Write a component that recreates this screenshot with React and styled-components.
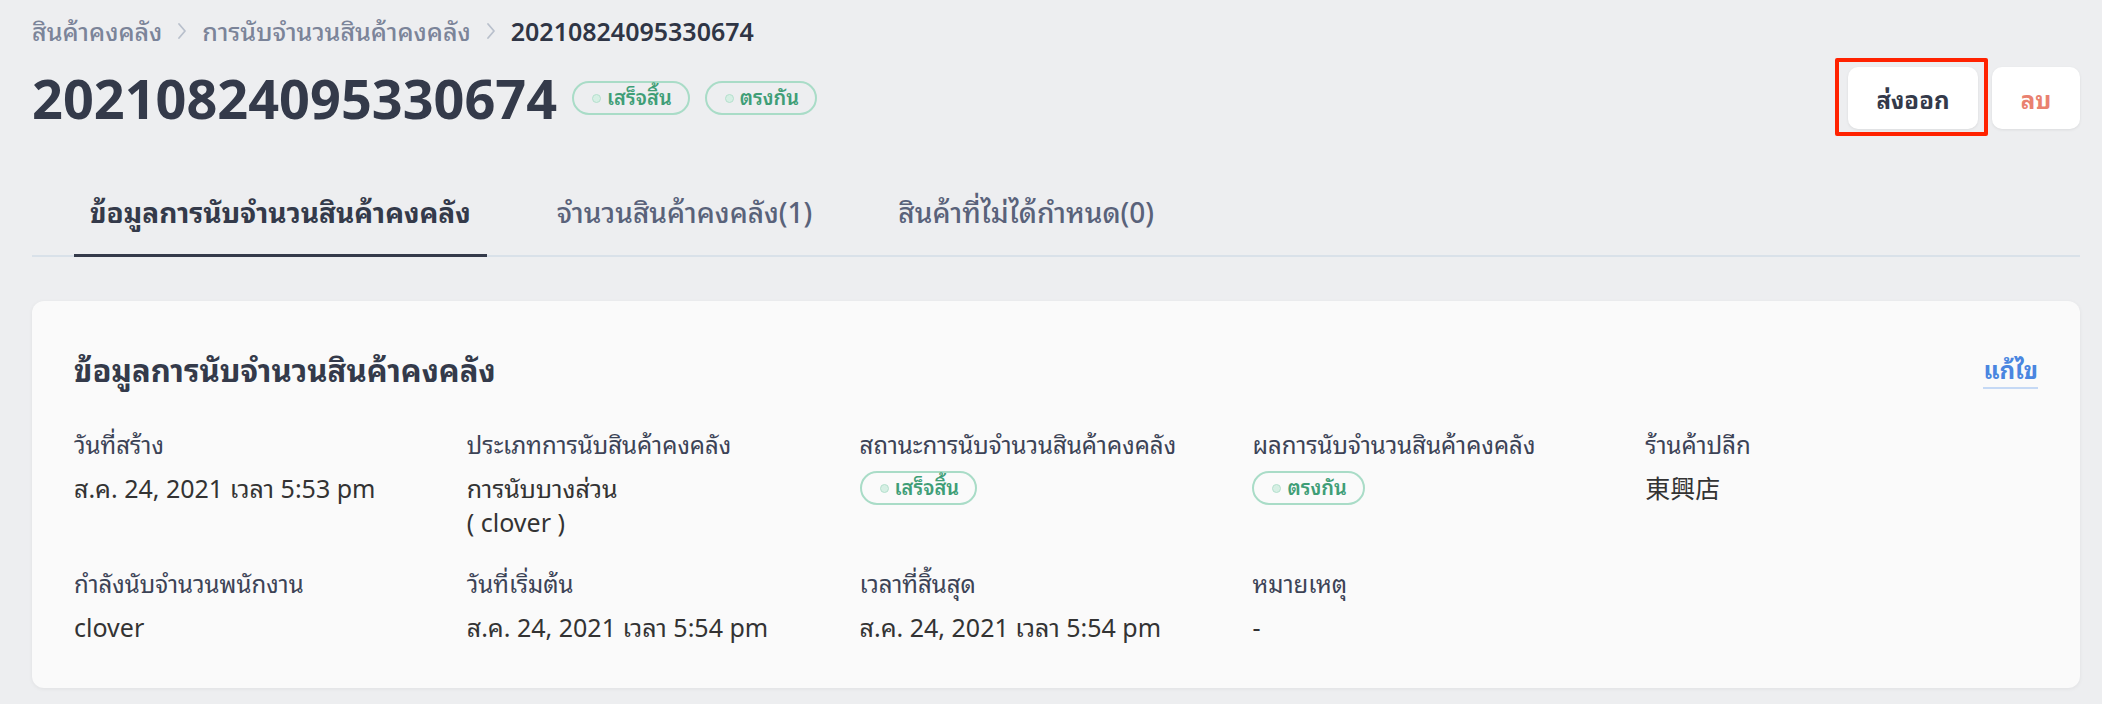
import React from "react";
import styled, { createGlobalStyle } from "styled-components";

const GlobalStyle = createGlobalStyle`
  html, body { margin: 0; padding: 0; }
  body {
    background: #edeef0;
    font-family: "Noto Sans", "Noto Sans Thai Looped", "Noto Looped Thai", "Noto Sans Thai", "Noto Sans CJK TC", sans-serif;
    color: #343a4a;
  }
`;

const Page = styled.div`
  padding: 14px 22px 18px 32px;
`;

const Breadcrumb = styled.nav`
  display: flex;
  align-items: center;
  gap: 15px;
  font-size: 25px;
  line-height: 34px;
`;

const Crumb = styled.span`
  color: ${(p) => (p.$current ? "#2f3545" : "#7b8499")};
  font-weight: ${(p) => (p.$current ? 600 : 500)};
`;

const Chevron = () => (
  <svg width="10" height="18" viewBox="0 0 10 18" fill="none">
    <polyline points="2,2 8,9 2,16" stroke="#b9c0cc" strokeWidth="1.8" strokeLinecap="round" strokeLinejoin="round" />
  </svg>
);

const TitleRow = styled.div`
  display: flex;
  align-items: center;
  justify-content: space-between;
  margin-top: 18px;
`;

const TitleLeft = styled.div`
  display: flex;
  align-items: center;
  gap: 15px;
`;

const Title = styled.h1`
  margin: 0;
  font-size: 54px;
  line-height: 64px;
  font-weight: 700;
  color: #343a4a;
`;

const Badge = styled.span`
  display: inline-flex;
  align-items: center;
  gap: 6px;
  height: 34px;
  box-sizing: border-box;
  padding: 0 16px 0 18px;
  border: 2px solid #a9dcc7;
  border-radius: 17px;
  color: #3f9e77;
  font-size: 20px;
  font-weight: 600;
  line-height: 1;
  white-space: nowrap;
`;

const Dot = styled.span`
  width: 7px;
  height: 7px;
  border-radius: 50%;
  background: #d6efe4;
  border: 1px solid #b4e0cd;
`;

const Actions = styled.div`
  display: flex;
  align-items: center;
  gap: 14px;
`;

const Highlight = styled.div`
  position: relative;
  display: flex;
  &::after {
    content: "";
    position: absolute;
    top: -9px;
    left: -13px;
    right: -10px;
    bottom: -7px;
    border: 4px solid #ff2200;
    border-radius: 2px;
    pointer-events: none;
  }
`;

const Button = styled.button`
  height: 62px;
  min-width: ${(p) => p.$w}px;
  padding: 0 24px;
  border: none;
  border-radius: 10px;
  background: #ffffff;
  box-shadow: 0 1px 3px rgba(0, 0, 0, 0.08);
  font-family: inherit;
  font-size: 24px;
  font-weight: 700;
  color: ${(p) => (p.$danger ? "#e98170" : "#343a4a")};
  cursor: pointer;
`;

const Tabs = styled.div`
  display: flex;
  gap: 54px;
  padding-left: 42px;
  margin-top: 66px;
  border-bottom: 2px solid #d9e1e9;
`;

const Tab = styled.div`
  padding: 0 16px 26px;
  margin-bottom: -2px;
  font-size: 28px;
  line-height: 32px;
  font-weight: ${(p) => (p.$active ? 700 : 500)};
  color: ${(p) => (p.$active ? "#343a4a" : "#59627a")};
  border-bottom: 3px solid ${(p) => (p.$active ? "#343a4a" : "transparent")};
`;

const Card = styled.section`
  margin-top: 44px;
  background: #fafafa;
  border-radius: 12px;
  box-shadow: 0 1px 4px rgba(0, 0, 0, 0.06);
  padding: 50px 42px 44px;
`;

const CardHeader = styled.div`
  display: flex;
  align-items: center;
  justify-content: space-between;
`;

const CardTitle = styled.h2`
  margin: 0;
  font-size: 31px;
  line-height: 36px;
  font-weight: 700;
  color: #343a4a;
`;

const EditLink = styled.a`
  font-size: 24px;
  line-height: 30px;
  font-weight: 700;
  color: #4a86e0;
  text-decoration: none;
  border-bottom: 2px solid #c5d9f5;
  padding-bottom: 2px;
  margin-top: 4px;
`;

const Grid = styled.div`
  display: grid;
  grid-template-columns: repeat(5, 1fr);
  row-gap: 31px;
  margin-top: 42px;
`;

const Field = styled.div`
  display: flex;
  flex-direction: column;
  align-items: flex-start;
`;

const Label = styled.div`
  font-size: 24px;
  line-height: 28px;
  color: #3c4356;
  margin-bottom: 12px;
`;

const Value = styled.div`
  font-size: 25px;
  line-height: 34px;
  color: #333333;
`;

const fields = [
  { label: "วันที่สร้าง", value: "ส.ค. 24, 2021 เวลา 5:53 pm" },
  { label: "ประเภทการนับสินค้าคงคลัง", value: ["การนับบางส่วน", "( clover )"] },
  { label: "สถานะการนับจำนวนสินค้าคงคลัง", badge: "เสร็จสิ้น" },
  { label: "ผลการนับจำนวนสินค้าคงคลัง", badge: "ตรงกัน" },
  { label: "ร้านค้าปลีก", value: "東興店" },
  { label: "กำลังนับจำนวนพนักงาน", value: "clover" },
  { label: "วันที่เริ่มต้น", value: "ส.ค. 24, 2021 เวลา 5:54 pm" },
  { label: "เวลาที่สิ้นสุด", value: "ส.ค. 24, 2021 เวลา 5:54 pm" },
  { label: "หมายเหตุ", value: "-" },
];

const StatusBadge = ({ children }) => (
  <Badge>
    <Dot />
    {children}
  </Badge>
);

export default function App() {
  return (
    <>
      <GlobalStyle />
      <Page>
        <Breadcrumb>
          <Crumb>สินค้าคงคลัง</Crumb>
          <Chevron />
          <Crumb>การนับจำนวนสินค้าคงคลัง</Crumb>
          <Chevron />
          <Crumb $current>20210824095330674</Crumb>
        </Breadcrumb>

        <TitleRow>
          <TitleLeft>
            <Title>20210824095330674</Title>
            <StatusBadge>เสร็จสิ้น</StatusBadge>
            <StatusBadge>ตรงกัน</StatusBadge>
          </TitleLeft>
          <Actions>
            <Highlight>
              <Button $w={130}>ส่งออก</Button>
            </Highlight>
            <Button $w={88} $danger>
              ลบ
            </Button>
          </Actions>
        </TitleRow>

        <Tabs>
          <Tab $active>ข้อมูลการนับจำนวนสินค้าคงคลัง</Tab>
          <Tab>จำนวนสินค้าคงคลัง(1)</Tab>
          <Tab>สินค้าที่ไม่ได้กำหนด(0)</Tab>
        </Tabs>

        <Card>
          <CardHeader>
            <CardTitle>ข้อมูลการนับจำนวนสินค้าคงคลัง</CardTitle>
            <EditLink href="#">แก้ไข</EditLink>
          </CardHeader>
          <Grid>
            {fields.map((f) => (
              <Field key={f.label}>
                <Label>{f.label}</Label>
                {f.badge ? (
                  <StatusBadge>{f.badge}</StatusBadge>
                ) : Array.isArray(f.value) ? (
                  f.value.map((v) => <Value key={v}>{v}</Value>)
                ) : (
                  <Value>{f.value}</Value>
                )}
              </Field>
            ))}
          </Grid>
        </Card>
      </Page>
    </>
  );
}
